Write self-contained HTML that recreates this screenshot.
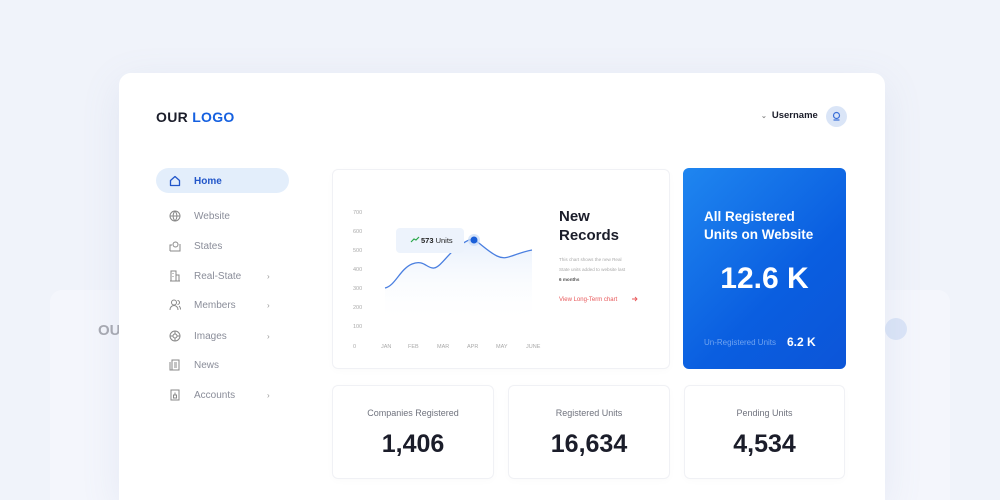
<!DOCTYPE html>
<html style="overflow:hidden;width:1000px;height:500px"><head><meta charset="utf-8"><style>
*{margin:0;padding:0;box-sizing:border-box}
body{width:1000px;height:500px;overflow:hidden;background:#f0f3fa;font-family:"Liberation Sans",sans-serif;position:relative}
.abs{position:absolute}
.ghost{left:50px;top:290px;width:900px;height:210px;background:#f4f6fc;border-radius:12px 12px 0 0}
.main{left:119px;top:73px;width:766px;height:427px;background:#fff;border-radius:12px 12px 0 0;box-shadow:0 10px 40px rgba(120,140,190,.12)}
.card{position:absolute;background:#fff;border:1px solid #f0f1f5;border-radius:6px;box-shadow:0 2px 8px rgba(0,0,0,.02)}
.nav{position:absolute;left:194px;font-size:10px;color:#8a8d99}
.ic{position:absolute;left:169px;width:12px;height:12px}
.chev{position:absolute;left:267px;font-size:8px;color:#999}
.lbl{font-size:9px;color:#70737e;text-align:center;position:absolute;width:100%;top:22px}
.num{font-size:25px;font-weight:bold;color:#1b1d2a;text-align:center;position:absolute;width:100%;top:44px}
</style></head><body>
<div class="abs ghost"></div>
<div class="abs" style="left:98px;top:322px;font-size:15px;font-weight:bold;color:#a8aab2">OU</div>
<div class="abs" style="left:885px;top:318px;width:22px;height:22px;border-radius:50%;background:#dbe5f7"></div>
<div class="abs main"></div>
<div class="abs" style="left:156px;top:109px;font-size:14px;font-weight:bold;color:#1b1d2a;letter-spacing:.3px">OUR <span style="color:#1560e0">LOGO</span></div>
<div class="abs" style="left:761px;top:110px;font-size:9.5px;font-weight:bold;color:#1b1d2a"><span style="font-size:7px;color:#888;margin-right:5px">⌄</span>Username</div>
<div class="abs" style="left:826px;top:106px;width:21px;height:21px;border-radius:50%;background:#dae5f7"><svg width="21" height="21"><circle cx="10.5" cy="9.5" r="3" fill="none" stroke="#3b6fd8" stroke-width="1.2"/><path d="M7.5 14h6" stroke="#3b6fd8" stroke-width="1.2"/></svg></div>

<div class="abs" style="left:156px;top:168px;width:133px;height:25px;border-radius:13px;background:#e3eefb"></div>
<svg class="ic" style="top:175px" viewBox="0 0 12 12"><path d="M1.5 5.5L6 1.5 10.5 5.5V10.5H1.5Z" fill="none" stroke="#2256c9" stroke-width="1.3" stroke-linejoin="round"/></svg>
<div class="nav" style="top:176px;color:#2256c9;font-weight:bold">Home</div>
<svg class="ic" style="top:210px" viewBox="0 0 12 12"><g fill="none" stroke="#888" stroke-width="1"><circle cx="6" cy="6" r="5"/><path d="M1 6h10M6 1c-2.5 3-2.5 7 0 10M6 1c2.5 3 2.5 7 0 10"/></g></svg>
<div class="nav" style="top:211px">Website</div>
<svg class="ic" style="top:240px" viewBox="0 0 12 12"><g fill="none" stroke="#888" stroke-width="1"><circle cx="6.5" cy="4.5" r="2.5"/><path d="M1 11h10V4M1 11V5h2"/></g></svg>
<div class="nav" style="top:241px">States</div>
<svg class="ic" style="top:270px" viewBox="0 0 12 12"><g fill="none" stroke="#888" stroke-width="1"><path d="M2 11V1h5v10M7 5h3v6M1 11h10M4 3v1M4 6v1"/></g></svg>
<div class="nav" style="top:271px">Real-State</div><div class="chev" style="top:272px">›</div>
<svg class="ic" style="top:299px" viewBox="0 0 12 12"><g fill="none" stroke="#888" stroke-width="1"><circle cx="5" cy="3.5" r="2.5"/><path d="M1 11c0-3 2-4.5 4-4.5s4 1.5 4 4.5M8.5 1.5a2 2 0 010 4M10 7c1 .7 1.5 2 1.5 3.5"/></g></svg>
<div class="nav" style="top:300px">Members</div><div class="chev" style="top:301px">›</div>
<svg class="ic" style="top:330px" viewBox="0 0 12 12"><g fill="none" stroke="#888" stroke-width="1"><circle cx="6" cy="6" r="5"/><circle cx="6" cy="6" r="2"/><path d="M6 1v3M6 8v3M1 6h3M8 6h3"/></g></svg>
<div class="nav" style="top:331px">Images</div><div class="chev" style="top:332px">›</div>
<svg class="ic" style="top:359px" viewBox="0 0 12 12"><g fill="none" stroke="#888" stroke-width="1"><path d="M3 1h7v10H3zM1 3v8h2M5 4h3M5 6h3M5 8h3"/></g></svg>
<div class="nav" style="top:360px">News</div>
<svg class="ic" style="top:389px" viewBox="0 0 12 12"><g fill="none" stroke="#888" stroke-width="1"><path d="M2 1h8v10H2zM4.5 6h3v3h-3zM6 3.5v2"/></g></svg>
<div class="nav" style="top:390px">Accounts</div><div class="chev" style="top:391px">›</div>

<div class="card" style="left:332px;top:169px;width:338px;height:200px"></div>
<svg class="abs" style="left:332px;top:169px" width="338" height="200">
<defs><linearGradient id="g" x1="0" y1="0" x2="0" y2="1"><stop offset="0" stop-color="#e8f0fc"/><stop offset="1" stop-color="#fff" stop-opacity="0"/></linearGradient></defs>
<g font-size="5.5" fill="#aaa" font-family="Liberation Sans">
<text x="21" y="45">700</text><text x="21" y="64">600</text><text x="21" y="83">500</text><text x="21" y="102">400</text><text x="21" y="121">300</text><text x="21" y="140">200</text><text x="21" y="159">100</text><text x="21" y="179">0</text>
<text x="49" y="179">JAN</text><text x="76" y="179">FEB</text><text x="105" y="179">MAR</text><text x="135" y="179">APR</text><text x="164" y="179">MAY</text><text x="194" y="179">JUNE</text></g>
<path d="M53 119C63 117 68 100 80 95S95 100 102 99 118 82 128 76 138 70 142 71 155 82 165 87 180 85 200 81V155H53Z" fill="url(#g)"/>
<path d="M53 119C63 117 68 100 80 95S95 100 102 99 118 82 128 76 138 70 142 71 155 82 165 87 180 85 200 81" fill="none" stroke="#4a7fe0" stroke-width="1.3"/>
<rect x="64" y="59" width="68" height="25" rx="4" fill="#edf3fc"/>
<path d="M79 73l3-3 2 1 3-3" stroke="#2aa84a" stroke-width="1.2" fill="none"/>
<text x="89" y="74" font-size="7.5" fill="#222" font-family="Liberation Sans"><tspan font-weight="bold">573</tspan> Units</text>
<circle cx="142" cy="71" r="6" fill="#c9dbf7" opacity=".7"/><circle cx="142" cy="71" r="3.5" fill="#1a5fd8"/>
<text x="227" y="52" font-size="15" font-weight="bold" fill="#1b1d2a" font-family="Liberation Sans">New</text>
<text x="227" y="71" font-size="15" font-weight="bold" fill="#1b1d2a" font-family="Liberation Sans">Records</text>
<g font-size="4.6" fill="#aaa" font-family="Liberation Sans"><text x="227" y="92">This chart shows the new Real</text><text x="227" y="102">State units added to website last</text><text x="227" y="112" fill="#555" font-weight="bold">6 months</text></g>
<text x="227" y="132" font-size="6" fill="#e8585a" font-family="Liberation Sans">View Long-Term chart</text>
<path d="M300 130h5M303 128l2 2-2 2" stroke="#e8585a" fill="none" stroke-width=".9"/>
</svg>

<div class="abs" style="left:683px;top:168px;width:163px;height:201px;border-radius:6px;background:linear-gradient(135deg,#1f86f0,#0a5ee0 60%,#0c55d8)"></div>
<div class="abs" style="left:704px;top:208px;font-size:13.5px;font-weight:bold;color:#fff;line-height:18px">All Registered<br>Units on Website</div>
<div class="abs" style="left:683px;top:262px;width:163px;text-align:center;font-size:30px;font-weight:bold;color:#fff">12.6 K</div>
<div class="abs" style="left:704px;top:338px;font-size:8px;color:#6fa3f0">Un-Registered Units</div>
<div class="abs" style="left:787px;top:335px;font-size:12px;font-weight:bold;color:#fff">6.2 K</div>

<div class="card" style="left:332px;top:385px;width:162px;height:94px"><div class="lbl">Companies Registered</div><div class="num">1,406</div></div>
<div class="card" style="left:508px;top:385px;width:162px;height:94px"><div class="lbl">Registered Units</div><div class="num">16,634</div></div>
<div class="card" style="left:684px;top:385px;width:161px;height:94px"><div class="lbl">Pending Units</div><div class="num">4,534</div></div>
</body></html>
